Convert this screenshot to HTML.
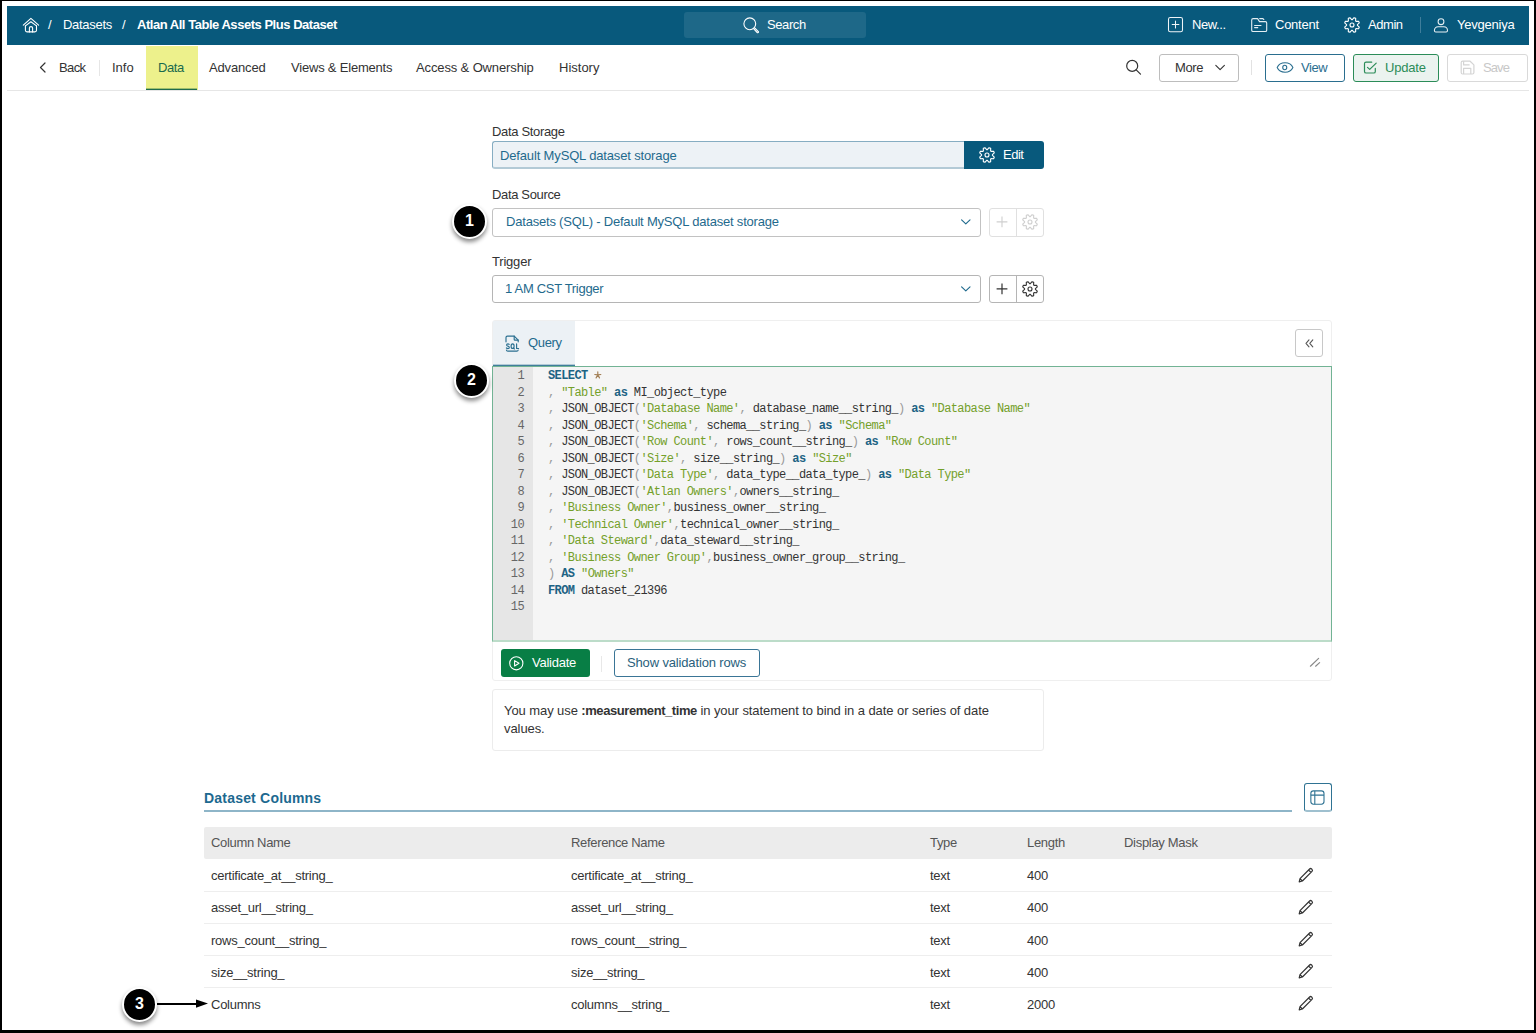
<!DOCTYPE html>
<html><head><meta charset="utf-8">
<style>
html,body{margin:0;padding:0;}
body{width:1536px;height:1033px;position:relative;overflow:hidden;background:#000;font-family:"Liberation Sans",sans-serif;font-size:13px;color:#333;}
#frame{position:absolute;left:2px;top:1px;width:1532px;height:1029px;background:#fff;overflow:hidden;}
.a{position:absolute;}
.t{position:absolute;white-space:nowrap;line-height:16px;font-size:13px;letter-spacing:-0.28px;}
svg{position:absolute;overflow:visible;}
.hdr{left:7px;top:6px;width:1522px;height:39px;background:#08597c;}
.ht{color:#fff;}
.tabline{left:7px;top:90px;width:1522px;height:1px;background:#e6e6e6;}
.btn{position:absolute;box-sizing:border-box;border-radius:3px;}
.code{position:absolute;font-family:"Liberation Mono",monospace;font-size:12px;line-height:16.5px;white-space:pre;letter-spacing:-0.6px;}
.kw{color:#1d6384;font-weight:bold;}
.st{color:#74a02a;}
.pu{color:#9a9a9a;}
.id{color:#333;}
.ln{position:absolute;font-family:"Liberation Mono",monospace;font-size:12px;letter-spacing:-0.6px;line-height:16.5px;color:#666;text-align:right;width:30px;}
.badge{position:absolute;width:31px;height:31px;border-radius:50%;background:#000;border:2px solid #fff;box-shadow:0 3px 4px rgba(0,0,0,0.45);color:#fff;font-weight:bold;font-size:16px;line-height:30px;text-align:center;}
</style></head><body>
<div id="frame">
<!-- coordinates inside frame are offset by (-2,-1) from page; we use page coords via wrapper -->
<div class="a" style="left:-2px;top:-1px;width:1536px;height:1033px;">

<!-- HEADER -->
<div class="a hdr"></div>
<!-- home icon -->
<svg style="left:22px;top:17px" width="18" height="17" viewBox="0 0 18 17" fill="none" stroke="#fff" stroke-width="1.1" stroke-linejoin="round" stroke-linecap="round">
  <path d="M1.3 8.2 L8.9 1.4 L16.6 8.2"/>
  <path d="M3.4 8.9 L8.9 4.7 L14.5 8.9"/>
  <path d="M3.4 8.9 V13.3 Q3.4 14.9 5 14.9 H12.9 Q14.5 14.9 14.5 13.3 V8.9"/>
  <path d="M7.4 14.9 V11 Q7.4 9.6 9 9.6 Q10.6 9.6 10.6 11 V14.9"/>
</svg>
<div class="t ht" style="left:48px;top:17px;">/</div>
<div class="t ht" style="left:63px;top:17px;letter-spacing:-0.3px">Datasets</div>
<div class="t ht" style="left:122px;top:17px;">/</div>
<div class="t ht" style="left:137px;top:17px;font-weight:bold;letter-spacing:-0.47px">Atlan All Table Assets Plus Dataset</div>

<!-- search -->
<div class="a" style="left:684px;top:12px;width:182px;height:26px;border-radius:3px;background:#1e6888;"></div>
<svg style="left:743px;top:17px" width="17" height="17" viewBox="0 0 17 17" fill="none" stroke="#fff" stroke-width="1.1">
  <circle cx="6.8" cy="6.8" r="5.9"/>
  <path d="M11.2 10.4 L15.4 14.6 Q15.8 15.3 15.1 15.6 Q14.6 15.9 14.2 15.5 L10.3 11.4" stroke-linejoin="round"/>
</svg>
<div class="t ht" style="left:767px;top:17px;letter-spacing:-0.4px">Search</div>

<!-- right header -->
<svg style="left:1168px;top:17px" width="16" height="16" viewBox="0 0 16 16" fill="none" stroke="#eef4f7" stroke-width="1.05">
  <rect x="0.5" y="0.5" width="14" height="14.3" rx="1.8"/>
  <path d="M7.5 4.1 V11 M4.2 7.5 H10.9" stroke-linecap="round"/>
</svg>
<div class="t ht" style="left:1192px;top:17px;letter-spacing:-0.4px">New...</div>
<svg style="left:1251px;top:17px" width="17" height="16" viewBox="0 0 17 16" fill="none" stroke="#e4eef3" stroke-width="1.1" stroke-linejoin="round" stroke-linecap="round">
  <path d="M0.7 3 Q0.7 1.6 2.1 1.6 H6.6 L8.5 4.6 H14.4 Q15.7 4.6 15.7 5.9 V13.2 Q15.7 14.5 14.4 14.5 H2 Q0.7 14.5 0.7 13.2 Z"/>
  <path d="M8.7 1.6 H11.9 L12.8 2.5"/>
  <path d="M3.6 8.5 H10 M3.6 10.6 H6.8"/>
</svg>
<div class="t ht" style="left:1275px;top:17px;letter-spacing:-0.25px">Content</div>
<svg style="left:1343px;top:16px" width="18" height="18" viewBox="0 0 18 18" fill="none" stroke="#fff" stroke-width="1.1" stroke-linejoin="round">
  <path d="M9.32 3.61 L11.06 1.69 L12.71 2.37 L12.59 4.96 L13.04 5.41 L15.63 5.29 L16.31 6.94 L14.39 8.68 L14.39 9.32 L16.31 11.06 L15.63 12.71 L13.04 12.59 L12.59 13.04 L12.71 15.63 L11.06 16.31 L9.32 14.39 L8.68 14.39 L6.94 16.31 L5.29 15.63 L5.41 13.04 L4.96 12.59 L2.37 12.71 L1.69 11.06 L3.61 9.32 L3.61 8.68 L1.69 6.94 L2.37 5.29 L4.96 5.41 L5.41 4.96 L5.29 2.37 L6.94 1.69 L8.68 3.61 Z"/>
  <circle cx="9" cy="9" r="2"/>
</svg>
<div class="t ht" style="left:1368px;top:17px;letter-spacing:-0.45px">Admin</div>
<div class="a" style="left:1420px;top:17px;width:1px;height:16px;background:#3f7e9b;"></div>
<svg style="left:1433px;top:17px" width="16" height="16" viewBox="0 0 16 16" fill="none" stroke="#e8f0f4" stroke-width="1.05">
  <circle cx="8" cy="4.7" r="2.9"/>
  <path d="M1.4 13.4 Q1.6 10 5.2 9.8 H10.8 Q14.4 10 14.5 13.4 Q14.5 14.9 13.1 14.9 H2.8 Q1.4 14.9 1.4 13.4 Z"/>
</svg>
<div class="t ht" style="left:1457px;top:17px;letter-spacing:-0.22px">Yevgeniya</div>

<!-- TABS -->
<div class="a tabline"></div>
<svg style="left:39px;top:62px" width="8" height="11" viewBox="0 0 8 11" fill="none" stroke="#333" stroke-width="1.2" stroke-linecap="round" stroke-linejoin="round">
  <path d="M6 1 L1.5 5.5 L6 10"/>
</svg>
<div class="t" style="left:59px;top:60px;letter-spacing:-0.6px">Back</div>
<div class="a" style="left:99px;top:60px;width:1px;height:16px;background:#e6e6e6;"></div>
<div class="t" style="left:112px;top:60px;letter-spacing:0px">Info</div>
<div class="a" style="left:146px;top:46px;width:52px;height:44px;background:#edf18c;"></div>
<div class="a" style="left:146px;top:89px;width:51px;height:1px;background:#1f6b4c;"></div><div class="a" style="left:146px;top:88px;width:51px;height:1px;background:#9fbf6e;"></div>
<div class="t" style="left:158px;top:60px;letter-spacing:-0.45px;color:#196a4c">Data</div>
<div class="t" style="left:209px;top:60px;letter-spacing:-0.15px">Advanced</div>
<div class="t" style="left:291px;top:60px;letter-spacing:-0.2px">Views &amp; Elements</div>
<div class="t" style="left:416px;top:60px;letter-spacing:-0.13px">Access &amp; Ownership</div>
<div class="t" style="left:559px;top:60px;letter-spacing:0px">History</div>

<svg style="left:1125px;top:59px" width="17" height="17" viewBox="0 0 17 17" fill="none" stroke="#333" stroke-width="1.2">
  <circle cx="7.2" cy="6.9" r="5.5"/>
  <path d="M11.2 10.9 L15.5 15.2" stroke-linecap="round"/>
</svg>
<div class="btn" style="left:1159px;top:54px;width:80px;height:28px;border:1px solid #bdbdbd;"></div>
<div class="t" style="left:1175px;top:60px;letter-spacing:-0.35px">More</div>
<svg style="left:1215px;top:64px" width="11" height="7" viewBox="0 0 11 7" fill="none" stroke="#333" stroke-width="1.1" stroke-linecap="round" stroke-linejoin="round">
  <path d="M0.8 1.3 L5.1 5.6 L9.4 1.3"/>
</svg>
<div class="a" style="left:1251px;top:60px;width:1px;height:15px;background:#e2e2e2;"></div>
<div class="btn" style="left:1265px;top:54px;width:80px;height:28px;border:1px solid #2a6e8f;"></div>
<svg style="left:1276px;top:62px" width="18" height="12" viewBox="0 0 18 12" fill="none" stroke="#2a6e8f" stroke-width="1.1" stroke-linejoin="round">
  <path d="M1.2 5.5 C4 -0.8 14 -0.8 16.9 5.5 C14 11.8 4 11.8 1.2 5.5 Z"/>
  <ellipse cx="8.75" cy="5.5" rx="2" ry="2.2"/>
</svg>
<div class="t" style="left:1301px;top:60px;letter-spacing:-0.4px;color:#2a6e8f">View</div>
<div class="btn" style="left:1353px;top:54px;width:86px;height:28px;border:1px solid #2b8c58;background:#ebf3ef;"></div>
<svg style="left:1363px;top:61px" width="15" height="14" viewBox="0 0 15 14" fill="none" stroke="#2b8c58" stroke-width="1.2" stroke-linecap="round" stroke-linejoin="round">
  <path d="M12.3 7.4 V10.4 Q12.3 12 10.7 12 H3.1 Q1.5 12 1.5 10.4 V2.7 Q1.5 1.2 3.1 1.2 H8.7"/>
  <path d="M4.5 6.4 L6.7 8.4 L13.2 2.1"/>
</svg>
<div class="t" style="left:1385px;top:60px;letter-spacing:-0.2px;color:#2b8c58">Update</div>
<div class="btn" style="left:1447px;top:54px;width:81px;height:28px;border:1px solid #d9d9d9;"></div>
<svg style="left:1460px;top:60px" width="15" height="15" viewBox="0 0 15 15" fill="none" stroke="#d4d4d4" stroke-width="1.2" stroke-linejoin="round">
  <path d="M1.2 2.7 Q1.2 1.2 2.7 1.2 H10.1 L13.9 4.9 V12.5 Q13.9 14 12.4 14 H2.7 Q1.2 14 1.2 12.5 Z"/>
  <path d="M3.6 1.2 V4.9 H9.6 M3.6 14 V8.3 H10.8 V14"/>
</svg>
<div class="t" style="left:1483px;top:60px;letter-spacing:-0.9px;color:#c8c8c8">Save</div>


<!-- DATA STORAGE -->
<div class="t" style="left:492px;top:124px;letter-spacing:-0.33px">Data Storage</div>
<div class="btn" style="left:492px;top:141px;width:476px;height:28px;border:1px solid #86adc2;border-bottom:2px solid #b3cad6;border-right:none;border-radius:3px 0 0 3px;background:#edf2f6;"></div>
<div class="t" style="left:500px;top:148px;letter-spacing:-0.15px;color:#1f6a8d">Default MySQL dataset storage</div>
<div class="btn" style="left:964px;top:141px;width:80px;height:28px;background:#08597c;border-radius:0 3px 3px 0;"></div>
<svg style="left:978px;top:146px" width="18" height="18" viewBox="0 0 18 18" fill="none" stroke="#fff" stroke-width="1.1" stroke-linejoin="round">
  <path d="M9.32 3.61 L11.06 1.69 L12.71 2.37 L12.59 4.96 L13.04 5.41 L15.63 5.29 L16.31 6.94 L14.39 8.68 L14.39 9.32 L16.31 11.06 L15.63 12.71 L13.04 12.59 L12.59 13.04 L12.71 15.63 L11.06 16.31 L9.32 14.39 L8.68 14.39 L6.94 16.31 L5.29 15.63 L5.41 13.04 L4.96 12.59 L2.37 12.71 L1.69 11.06 L3.61 9.32 L3.61 8.68 L1.69 6.94 L2.37 5.29 L4.96 5.41 L5.41 4.96 L5.29 2.37 L6.94 1.69 L8.68 3.61 Z"/>
  <circle cx="9" cy="9" r="2"/>
</svg>
<div class="t" style="left:1003px;top:147px;letter-spacing:-0.5px;color:#fff">Edit</div>

<!-- DATA SOURCE -->
<div class="t" style="left:492px;top:187px;letter-spacing:-0.35px">Data Source</div>
<div class="btn" style="left:492px;top:208px;width:489px;height:29px;border:1px solid #c2c2c2;"></div>
<div class="t" style="left:506px;top:214px;letter-spacing:-0.2px;color:#1f6a8d">Datasets (SQL) - Default MySQL dataset storage</div>
<svg style="left:960px;top:218px" width="12" height="8" viewBox="0 0 12 8" fill="none" stroke="#1f6a8d" stroke-width="1.15" stroke-linecap="round" stroke-linejoin="round">
  <path d="M1.6 1.9 L5.8 5.9 L10 1.9"/>
</svg>
<div class="btn" style="left:989px;top:208px;width:55px;height:29px;border:1px solid #e0e0e0;"></div>
<div class="a" style="left:1016px;top:208px;width:1px;height:29px;background:#e0e0e0;"></div>
<svg style="left:996px;top:216px" width="12" height="12" viewBox="0 0 12 12" fill="none" stroke="#cfcfcf" stroke-width="1.1">
  <path d="M6 0.5 V11.3 M0.6 5.9 H11.4"/>
</svg>
<svg style="left:1021px;top:213px" width="18" height="18" viewBox="0 0 18 18" fill="none" stroke="#cfcfcf" stroke-width="1.1" stroke-linejoin="round">
  <path d="M9.32 3.61 L11.06 1.69 L12.71 2.37 L12.59 4.96 L13.04 5.41 L15.63 5.29 L16.31 6.94 L14.39 8.68 L14.39 9.32 L16.31 11.06 L15.63 12.71 L13.04 12.59 L12.59 13.04 L12.71 15.63 L11.06 16.31 L9.32 14.39 L8.68 14.39 L6.94 16.31 L5.29 15.63 L5.41 13.04 L4.96 12.59 L2.37 12.71 L1.69 11.06 L3.61 9.32 L3.61 8.68 L1.69 6.94 L2.37 5.29 L4.96 5.41 L5.41 4.96 L5.29 2.37 L6.94 1.69 L8.68 3.61 Z"/>
  <circle cx="9" cy="9" r="2"/>
</svg>
<div class="badge" style="left:452px;top:204px;">1</div>

<!-- TRIGGER -->
<div class="t" style="left:492px;top:254px;letter-spacing:-0.2px">Trigger</div>
<div class="btn" style="left:492px;top:275px;width:489px;height:28px;border:1px solid #b5b5b5;"></div>
<div class="t" style="left:505px;top:281px;letter-spacing:-0.3px;color:#1f6a8d">1 AM CST Trigger</div>
<svg style="left:960px;top:285px" width="12" height="8" viewBox="0 0 12 8" fill="none" stroke="#1f6a8d" stroke-width="1.15" stroke-linecap="round" stroke-linejoin="round">
  <path d="M1.6 1.9 L5.8 5.9 L10 1.9"/>
</svg>
<div class="btn" style="left:989px;top:275px;width:55px;height:28px;border:1px solid #b5b5b5;"></div>
<div class="a" style="left:1016px;top:275px;width:1px;height:28px;background:#b5b5b5;"></div>
<svg style="left:996px;top:283px" width="12" height="12" viewBox="0 0 12 12" fill="none" stroke="#333" stroke-width="1.2">
  <path d="M6 0.5 V11.3 M0.6 5.9 H11.4"/>
</svg>
<svg style="left:1021px;top:280px" width="18" height="18" viewBox="0 0 18 18" fill="none" stroke="#333" stroke-width="1.1" stroke-linejoin="round">
  <path d="M9.32 3.61 L11.06 1.69 L12.71 2.37 L12.59 4.96 L13.04 5.41 L15.63 5.29 L16.31 6.94 L14.39 8.68 L14.39 9.32 L16.31 11.06 L15.63 12.71 L13.04 12.59 L12.59 13.04 L12.71 15.63 L11.06 16.31 L9.32 14.39 L8.68 14.39 L6.94 16.31 L5.29 15.63 L5.41 13.04 L4.96 12.59 L2.37 12.71 L1.69 11.06 L3.61 9.32 L3.61 8.68 L1.69 6.94 L2.37 5.29 L4.96 5.41 L5.41 4.96 L5.29 2.37 L6.94 1.69 L8.68 3.61 Z"/>
  <circle cx="9" cy="9" r="2"/>
</svg>

<!-- QUERY PANEL -->
<div class="btn" style="left:492px;top:320px;width:840px;height:361px;border:1px solid #efefef;"></div>
<div class="a" style="left:493px;top:321px;width:82px;height:44px;background:#ecf1f5;"></div>
<div class="a" style="left:493px;top:365px;width:82px;height:1px;background:#3f7e9b;"></div><div class="a" style="left:493px;top:364px;width:82px;height:1px;background:#b3cad6;"></div>
<svg style="left:505px;top:335px" width="15" height="17" viewBox="0 0 15 17" fill="none" stroke="#2a6f90" stroke-width="1.15" stroke-linejoin="round" stroke-linecap="round">
  <path d="M1 6.8 V2.5 Q1 1.1 2.4 1.1 H9.2 L13.2 5.1 V6.8"/>
  <path d="M9.2 1.1 V4.4 Q9.2 5.1 9.9 5.1 H13.2"/>
  <path d="M1.4 15 Q1.6 16.1 2.8 16.1 H11.8 Q13 16.1 13.2 15"/>
  <path d="M4.2 9.3 Q3.8 8.8 2.9 8.8 Q1.6 8.8 1.6 9.9 Q1.6 10.8 2.9 11.1 Q4.3 11.4 4.3 12.4 Q4.3 13.6 2.9 13.6 Q1.8 13.6 1.4 12.9"/>
  <ellipse cx="7.6" cy="11.2" rx="1.5" ry="2.3"/>
  <path d="M8.2 12.8 L9.4 14"/>
  <path d="M11.6 8.9 V13.5 H13.6"/>
</svg>
<div class="t" style="left:528px;top:335px;letter-spacing:-0.35px;color:#1f6a8d">Query</div>
<div class="btn" style="left:1295px;top:329px;width:28px;height:28px;border:1px solid #c8c8c8;"></div>
<svg style="left:1305px;top:339px" width="9" height="9" viewBox="0 0 9 9" fill="none" stroke="#555" stroke-width="1.1" stroke-linecap="round" stroke-linejoin="round">
  <path d="M4 0.8 L1 4.3 L4 7.8 M7.8 0.8 L4.8 4.3 L7.8 7.8"/>
</svg>
<!-- editor -->
<div class="a" style="left:492px;top:366px;width:840px;height:276px;box-sizing:border-box;border:1px solid #72b394;border-bottom:2px solid #bcdcc9;background:#f5f5f5;"></div>
<div class="a" style="left:493px;top:367px;width:40px;height:273px;background:#e6e6e6;"></div>
<div class="ln" style="left:494px;top:368px;">1<br>2<br>3<br>4<br>5<br>6<br>7<br>8<br>9<br>10<br>11<br>12<br>13<br>14<br>15</div>
<div class="code" style="left:548px;top:368px;"><span class="kw">SELECT</span>  
<span class="pu">,</span> <span class="st">"Table"</span> <span class="kw">as</span> <span class="id">MI_object_type</span>
<span class="pu">,</span> <span class="id">JSON_OBJECT</span><span class="pu">(</span><span class="st">'Database Name'</span><span class="pu">,</span> <span class="id">database_name__string_</span><span class="pu">)</span> <span class="kw">as</span> <span class="st">"Database Name"</span>
<span class="pu">,</span> <span class="id">JSON_OBJECT</span><span class="pu">(</span><span class="st">'Schema'</span><span class="pu">,</span> <span class="id">schema__string_</span><span class="pu">)</span> <span class="kw">as</span> <span class="st">"Schema"</span>
<span class="pu">,</span> <span class="id">JSON_OBJECT</span><span class="pu">(</span><span class="st">'Row Count'</span><span class="pu">,</span> <span class="id">rows_count__string_</span><span class="pu">)</span> <span class="kw">as</span> <span class="st">"Row Count"</span>
<span class="pu">,</span> <span class="id">JSON_OBJECT</span><span class="pu">(</span><span class="st">'Size'</span><span class="pu">,</span> <span class="id">size__string_</span><span class="pu">)</span> <span class="kw">as</span> <span class="st">"Size"</span>
<span class="pu">,</span> <span class="id">JSON_OBJECT</span><span class="pu">(</span><span class="st">'Data Type'</span><span class="pu">,</span> <span class="id">data_type__data_type_</span><span class="pu">)</span> <span class="kw">as</span> <span class="st">"Data Type"</span>
<span class="pu">,</span> <span class="id">JSON_OBJECT</span><span class="pu">(</span><span class="st">'Atlan Owners'</span><span class="pu">,</span><span class="id">owners__string_</span>
<span class="pu">,</span> <span class="st">'Business Owner'</span><span class="pu">,</span><span class="id">business_owner__string_</span>
<span class="pu">,</span> <span class="st">'Technical Owner'</span><span class="pu">,</span><span class="id">technical_owner__string_</span>
<span class="pu">,</span> <span class="st">'Data Steward'</span><span class="pu">,</span><span class="id">data_steward__string_</span>
<span class="pu">,</span> <span class="st">'Business Owner Group'</span><span class="pu">,</span><span class="id">business_owner_group__string_</span>
<span class="pu">)</span> <span class="kw">AS</span> <span class="st">"Owners"</span>
<span class="kw">FROM</span> <span class="id">dataset_21396</span>
</div>
<svg style="left:593px;top:370px" width="10" height="10" viewBox="0 0 10 10" fill="none" stroke="#a27f55" stroke-width="1.15" stroke-linecap="round">
  <path d="M4.8 4.9 V1.9 M4.8 4.9 L1.8 4.5 M4.8 4.9 L7.8 4.5 M4.8 4.9 L3.1 7.9 M4.8 4.9 L6.5 7.9"/>
</svg>
<div class="badge" style="left:454px;top:363px;">2</div>
<!-- validate bar -->
<div class="btn" style="left:501px;top:649px;width:89px;height:28px;background:#087e45;"></div>
<svg style="left:509px;top:656px" width="15" height="15" viewBox="0 0 15 15" fill="none" stroke="#fff" stroke-width="1.1" stroke-linejoin="round">
  <circle cx="7.3" cy="7.3" r="6.6"/>
  <path d="M5.6 4.6 L10 7.3 L5.6 10 Z"/>
</svg>
<div class="t" style="left:532px;top:655px;letter-spacing:-0.25px;color:#fff">Validate</div>
<div class="a" style="left:601px;top:656px;width:1px;height:16px;background:#e8e8e8;"></div>
<div class="btn" style="left:614px;top:649px;width:146px;height:28px;border:1px solid #3a7596;"></div>
<div class="t" style="left:627px;top:655px;letter-spacing:-0.15px;color:#2a5f7c">Show validation rows</div>
<svg style="left:1309px;top:656px" width="12" height="12" viewBox="0 0 12 12" fill="none" stroke="#8a8a8a" stroke-width="1.2" stroke-linecap="round">
  <path d="M1.4 10.2 L9.6 2.4 M6.6 10.2 L10.6 6.6"/>
</svg>

<!-- INFO -->
<div class="btn" style="left:492px;top:689px;width:552px;height:62px;border:1px solid #ececec;"></div>
<div class="t" style="left:504px;top:702px;line-height:18.3px;letter-spacing:-0.08px;white-space:normal;width:505px">You may use <b style="letter-spacing:-0.43px">:measurement_time</b> in your statement to bind in a date or series of date values.</div>

<!-- DATASET COLUMNS -->
<div class="t" style="left:204px;top:789.5px;font-size:14px;font-weight:bold;letter-spacing:0.2px;color:#1d6990">Dataset Columns</div>
<div class="a" style="left:204px;top:810px;width:1088px;height:2px;background:#8eb5c8;"></div>
<div class="btn" style="left:1304px;top:783px;width:28px;height:29px;border:1px solid #2f7393;border-bottom:2px solid #9fc0cf;"></div>
<svg style="left:1310px;top:790px" width="16" height="16" viewBox="0 0 16 16" fill="none" stroke="#2f7393" stroke-width="1.1">
  <rect x="0.85" y="0.9" width="13.15" height="13.3" rx="2.6"/>
  <path d="M0.85 5.1 H14 M4.8 0.9 V14.2"/>
</svg>
<div class="a" style="left:204px;top:827px;width:1128px;height:32px;background:#ececec;border-radius:2px;"></div>
<div class="t" style="left:211px;top:835px;letter-spacing:-0.33px;color:#555">Column Name</div>
<div class="t" style="left:571px;top:835px;letter-spacing:-0.33px;color:#555">Reference Name</div>
<div class="t" style="left:930px;top:835px;letter-spacing:-0.3px;color:#555">Type</div>
<div class="t" style="left:1027px;top:835px;letter-spacing:-0.3px;color:#555">Length</div>
<div class="t" style="left:1124px;top:835px;letter-spacing:-0.3px;color:#555">Display Mask</div>
<div class="t" style="left:211px;top:868.3px;letter-spacing:-0.25px">certificate_at__string_</div>
<div class="t" style="left:571px;top:868.3px;letter-spacing:-0.25px">certificate_at__string_</div>
<div class="t" style="left:930px;top:868.3px;letter-spacing:-0.25px">text</div>
<div class="t" style="left:1027px;top:868.3px;letter-spacing:-0.25px">400</div>
<svg style="left:1298px;top:867px" width="16" height="16" viewBox="0 0 16 16" fill="none" stroke="#333" stroke-width="1.2" stroke-linejoin="round">
  <path d="M1.2 14.8 L2 11.6 L11.6 2 Q12.6 1 13.6 2 L14 2.4 Q15 3.4 14 4.4 L4.4 14 Z M10.6 3 L13 5.4 M2 11.6 L4.4 14"/>
</svg>
<div class="a" style="left:204px;top:891px;width:1128px;height:1px;background:#eeeeee;"></div>
<div class="t" style="left:211px;top:900.3px;letter-spacing:-0.25px">asset_url__string_</div>
<div class="t" style="left:571px;top:900.3px;letter-spacing:-0.25px">asset_url__string_</div>
<div class="t" style="left:930px;top:900.3px;letter-spacing:-0.25px">text</div>
<div class="t" style="left:1027px;top:900.3px;letter-spacing:-0.25px">400</div>
<svg style="left:1298px;top:899px" width="16" height="16" viewBox="0 0 16 16" fill="none" stroke="#333" stroke-width="1.2" stroke-linejoin="round">
  <path d="M1.2 14.8 L2 11.6 L11.6 2 Q12.6 1 13.6 2 L14 2.4 Q15 3.4 14 4.4 L4.4 14 Z M10.6 3 L13 5.4 M2 11.6 L4.4 14"/>
</svg>
<div class="a" style="left:204px;top:923px;width:1128px;height:1px;background:#eeeeee;"></div>
<div class="t" style="left:211px;top:932.6px;letter-spacing:-0.25px">rows_count__string_</div>
<div class="t" style="left:571px;top:932.6px;letter-spacing:-0.25px">rows_count__string_</div>
<div class="t" style="left:930px;top:932.6px;letter-spacing:-0.25px">text</div>
<div class="t" style="left:1027px;top:932.6px;letter-spacing:-0.25px">400</div>
<svg style="left:1298px;top:931px" width="16" height="16" viewBox="0 0 16 16" fill="none" stroke="#333" stroke-width="1.2" stroke-linejoin="round">
  <path d="M1.2 14.8 L2 11.6 L11.6 2 Q12.6 1 13.6 2 L14 2.4 Q15 3.4 14 4.4 L4.4 14 Z M10.6 3 L13 5.4 M2 11.6 L4.4 14"/>
</svg>
<div class="a" style="left:204px;top:955px;width:1128px;height:1px;background:#eeeeee;"></div>
<div class="t" style="left:211px;top:964.6px;letter-spacing:-0.25px">size__string_</div>
<div class="t" style="left:571px;top:964.6px;letter-spacing:-0.25px">size__string_</div>
<div class="t" style="left:930px;top:964.6px;letter-spacing:-0.25px">text</div>
<div class="t" style="left:1027px;top:964.6px;letter-spacing:-0.25px">400</div>
<svg style="left:1298px;top:963px" width="16" height="16" viewBox="0 0 16 16" fill="none" stroke="#333" stroke-width="1.2" stroke-linejoin="round">
  <path d="M1.2 14.8 L2 11.6 L11.6 2 Q12.6 1 13.6 2 L14 2.4 Q15 3.4 14 4.4 L4.4 14 Z M10.6 3 L13 5.4 M2 11.6 L4.4 14"/>
</svg>
<div class="a" style="left:204px;top:987px;width:1128px;height:1px;background:#eeeeee;"></div>
<div class="t" style="left:211px;top:996.8px;letter-spacing:-0.25px">Columns</div>
<div class="t" style="left:571px;top:996.8px;letter-spacing:-0.25px">columns__string_</div>
<div class="t" style="left:930px;top:996.8px;letter-spacing:-0.25px">text</div>
<div class="t" style="left:1027px;top:996.8px;letter-spacing:-0.25px">2000</div>
<svg style="left:1298px;top:995px" width="16" height="16" viewBox="0 0 16 16" fill="none" stroke="#333" stroke-width="1.2" stroke-linejoin="round">
  <path d="M1.2 14.8 L2 11.6 L11.6 2 Q12.6 1 13.6 2 L14 2.4 Q15 3.4 14 4.4 L4.4 14 Z M10.6 3 L13 5.4 M2 11.6 L4.4 14"/>
</svg>
<div class="badge" style="left:122px;top:987px;">3</div>
<div class="a" style="left:157px;top:1003px;width:42px;height:2px;background:#000;"></div>
<svg style="left:196px;top:999px" width="13" height="10" viewBox="0 0 13 10"><path d="M0 0.5 L12 4.6 L0 8.7 Z" fill="#000"/></svg>

</div>
</div>
</body></html>
